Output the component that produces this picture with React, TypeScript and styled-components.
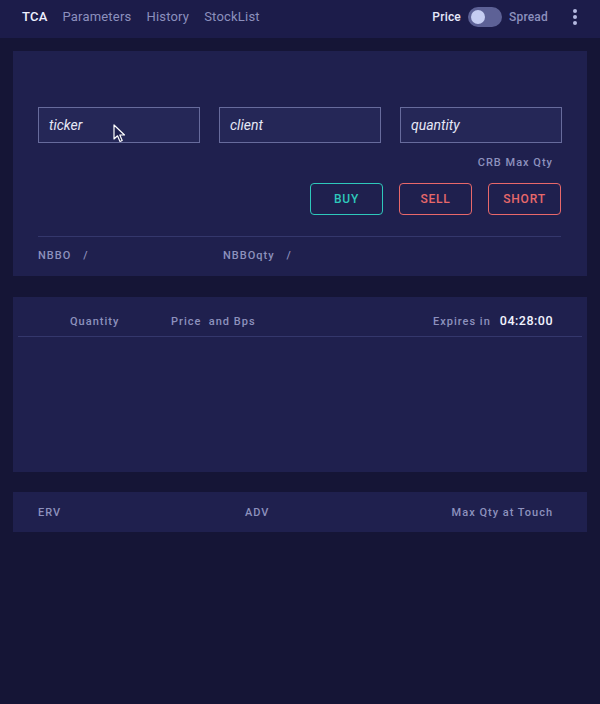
import React from "react";
import styled, { createGlobalStyle } from "styled-components";

const Global = createGlobalStyle`
  html, body { margin: 0; padding: 0; background: #151536; }
  body { font-family: Roboto, "Noto Sans", sans-serif; min-height: 704px; }
  * { box-sizing: border-box; }
`;

const Page = styled.div`
  min-height: 704px;
  background: #151536;
  display: flex;
  flex-direction: column;
`;

const Header = styled.header`
  height: 38px;
  background: #1c1c4a;
  display: flex;
  align-items: center;
  padding: 0 23px 5px 22px;
`;

const Nav = styled.nav`
  display: flex;
  align-items: center;
  gap: 15px;
`;

const NavItem = styled.span<{ $active?: boolean }>`
  font-size: 13px;
  letter-spacing: 0.2px;
  font-weight: ${(p) => (p.$active ? 500 : 400)};
  color: ${(p) => (p.$active ? "#eef0ff" : "#8c90bd")};
`;

const Spacer = styled.div`
  flex: 1;
`;

const ToggleGroup = styled.div`
  display: flex;
  align-items: center;
  gap: 7px;
`;

const ToggleLabel = styled.span<{ $on?: boolean }>`
  font-size: 12px;
  font-weight: 500;
  letter-spacing: 0.2px;
  color: ${(p) => (p.$on ? "#e6e8fa" : "#8c90bd")};
`;

const Track = styled.div`
  width: 34px;
  height: 20px;
  border-radius: 10px;
  background: #5d6196;
  display: flex;
  align-items: center;
  padding-left: 3px;
`;

const Knob = styled.div`
  width: 14px;
  height: 14px;
  border-radius: 50%;
  background: #c6cdf2;
`;

const MenuButton = styled.div`
  margin-left: 25px;
  display: flex;
  flex-direction: column;
  gap: 2px;
`;

const Dot = styled.span`
  width: 4px;
  height: 4px;
  border-radius: 50%;
  background: #b4b9e0;
`;

const Content = styled.main`
  padding: 13px 13px 0;
  display: flex;
  flex-direction: column;
  gap: 21px;
`;

const Panel = styled.section`
  background: #1f204e;
  position: relative;
`;

const OrderPanel = styled(Panel)`
  padding: 56px 26px 0 25px;
  height: 225px;
`;

const InputRow = styled.div`
  display: grid;
  grid-template-columns: repeat(3, 162px);
  gap: 19px;
`;

const Field = styled.div`
  height: 36px;
  border: 1px solid #676b9c;
  background: #252757;
  display: flex;
  align-items: center;
  padding-left: 10px;
  font-size: 14px;
  font-style: italic;
  color: #e6e8f6;
`;

const HintRow = styled.div`
  display: flex;
  justify-content: flex-end;
  padding-right: 8px;
  margin-top: 12px;
  height: 14px;
  align-items: center;
`;

const Label = styled.span`
  font-size: 11px;
  font-weight: 500;
  letter-spacing: 1px;
  color: #8d91bd;
`;

const ButtonRow = styled.div`
  display: flex;
  justify-content: flex-end;
  gap: 16px;
  margin-top: 14px;
`;

const ActionButton = styled.button<{ $color: string }>`
  width: 73px;
  height: 32px;
  border: 1px solid ${(p) => p.$color};
  border-radius: 4px;
  background: transparent;
  color: ${(p) => p.$color};
  font-family: Roboto, sans-serif;
  font-size: 12px;
  font-weight: 500;
  letter-spacing: 0.8px;
  padding: 0;
`;

const Divider = styled.div<{ $inset?: number }>`
  height: 1px;
  background: #34376c;
  margin: 0 ${(p) => p.$inset ?? 0}px;
`;

const RuleWrap = styled.div`
  margin-top: 21px;
`;

const NbboRow = styled.div`
  display: grid;
  grid-template-columns: 185px auto;
  height: 37px;
  align-items: center;
`;

const Pair = styled.div`
  display: flex;
  gap: 12px;
`;

const QuotePanel = styled(Panel)`
  height: 175px;
  padding-top: 14px;
`;

const QuoteHead = styled.div`
  display: flex;
  align-items: center;
  height: 16px;
  padding: 0 34px 0 57px;
  margin-bottom: 9px;
`;

const Col = styled.div<{ $w?: number }>`
  width: ${(p) => (p.$w ? `${p.$w}px` : "auto")};
`;

const Expires = styled.div`
  display: flex;
  align-items: baseline;
  gap: 9px;
  padding-top: 2px;
`;

const Timer = styled.span`
  font-size: 12.5px;
  font-weight: 500;
  letter-spacing: 0.5px;
  color: #f2f3ff;
`;

const StatsPanel = styled(Panel)`
  height: 40px;
  display: grid;
  grid-template-columns: 207px 1fr auto;
  align-items: center;
  padding: 0 34px 0 25px;
  margin-top: -1px;
`;

const Cursor = styled.svg`
  position: absolute;
  left: 100px;
  top: 73px;
`;

export default function App() {
  return (
    <>
      <Global />
      <Page>
        <Header>
          <Nav>
            <NavItem $active>TCA</NavItem>
            <NavItem>Parameters</NavItem>
            <NavItem>History</NavItem>
            <NavItem>StockList</NavItem>
          </Nav>
          <Spacer />
          <ToggleGroup>
            <ToggleLabel $on>Price</ToggleLabel>
            <Track>
              <Knob />
            </Track>
            <ToggleLabel>Spread</ToggleLabel>
          </ToggleGroup>
          <MenuButton>
            <Dot />
            <Dot />
            <Dot />
          </MenuButton>
        </Header>
        <Content>
          <OrderPanel>
            <InputRow>
              <Field>ticker</Field>
              <Field>client</Field>
              <Field>quantity</Field>
            </InputRow>
            <HintRow>
              <Label>CRB Max Qty</Label>
            </HintRow>
            <ButtonRow>
              <ActionButton $color="#2ec8bb">BUY</ActionButton>
              <ActionButton $color="#e8686a">SELL</ActionButton>
              <ActionButton $color="#e8686a">SHORT</ActionButton>
            </ButtonRow>
            <RuleWrap>
              <Divider />
            </RuleWrap>
            <NbboRow>
              <Pair>
                <Label>NBBO</Label>
                <Label>/</Label>
              </Pair>
              <Pair>
                <Label>NBBOqty</Label>
                <Label>/</Label>
              </Pair>
            </NbboRow>
            <Cursor width="14" height="20" viewBox="0 0 14 20">
              <path d="M1 1 L1 15 L4.5 11.8 L7 17.5 L9.2 16.5 L6.8 11 L11.5 11 Z" fill="#1f204e" stroke="#ffffff" strokeWidth="1.2" strokeLinejoin="round" />
            </Cursor>
          </OrderPanel>
          <QuotePanel>
            <QuoteHead>
              <Col $w={101}>
                <Label>Quantity</Label>
              </Col>
              <Col>
                <Label>Price&nbsp;&nbsp;and Bps</Label>
              </Col>
              <Spacer />
              <Expires>
                <Label>Expires in</Label>
                <Timer>04:28:00</Timer>
              </Expires>
            </QuoteHead>
            <Divider $inset={5} />
          </QuotePanel>
          <StatsPanel>
            <Label>ERV</Label>
            <Label>ADV</Label>
            <Label>Max Qty at Touch</Label>
          </StatsPanel>
        </Content>
      </Page>
    </>
  );
}
